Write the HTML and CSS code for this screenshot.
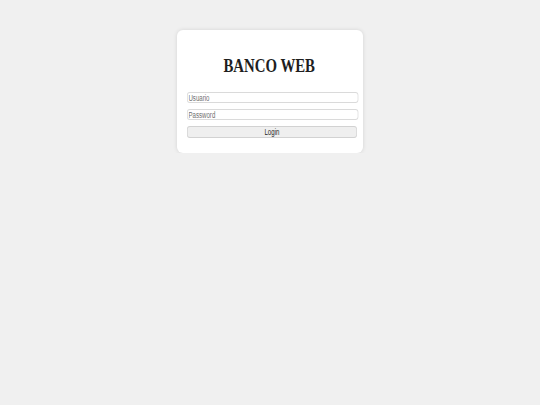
FILE: index.html
```html
<!DOCTYPE html>
<html lang="es">
<head>
<meta charset="utf-8">
<title>Banco Web</title>
<link rel="stylesheet" href="styles.css">
</head>
<body>
<div class="card">
  <h1 class="title"><span class="title-text">BANCO WEB</span></h1>
  <form class="form">
    <input class="field" type="text" placeholder="Usuario">
    <input class="field" type="password" placeholder="Password">
    <button class="btn" type="button">Login</button>
  </form>
</div>
</body>
</html>
```

FILE: styles.css
```css
html, body {
  margin: 0;
  padding: 0;
  background: #f0f0f0;
}
body {
  font-family: "Liberation Sans", Arial, sans-serif;
}
.card {
  width: 186px;
  height: 123px;
  margin: 30px auto 0;
  background: #ffffff;
  border-radius: 6px;
  box-shadow: 0 0 4px rgba(0, 0, 0, 0.12);
  box-sizing: border-box;
  padding: 0 5px 0 10px;
}
.title {
  margin: 0;
  padding-top: 24px;
  height: 38px;
  text-align: center;
  font-family: "Liberation Serif", serif;
  font-weight: bold;
  font-size: 19.5px;
  line-height: 24px;
  color: #1e1e1e;
  box-sizing: content-box;
}
.title-text {
  display: inline-block;
  transform: scaleX(0.76);
  transform-origin: center;
  margin-left: -6px;
}
.form {
  width: 238px;
  display: flex;
  flex-direction: column;
  gap: 6px;
  transform: scaleX(0.72);
  transform-origin: left top;
}
.field {
  width: 238px;
  height: 11px;
  box-sizing: border-box;
  margin: 0;
  padding: 0 1px;
  border: 1px solid #dadada;
  border-radius: 4px / 3px;
  background: #fff;
  font-family: inherit;
  font-size: 8.5px;
  line-height: 9px;
  color: #333;
  outline: none;
}
.field::placeholder {
  color: #707070;
}
.btn {
  width: 236px;
  height: 12px;
  box-sizing: border-box;
  margin: 0;
  padding: 0;
  border: 1px solid #d2d2d2;
  border-radius: 4px / 3px;
  background: #efefef;
  font-family: inherit;
  font-size: 8.5px;
  line-height: 10px;
  color: #1e1e1e;
}
```
